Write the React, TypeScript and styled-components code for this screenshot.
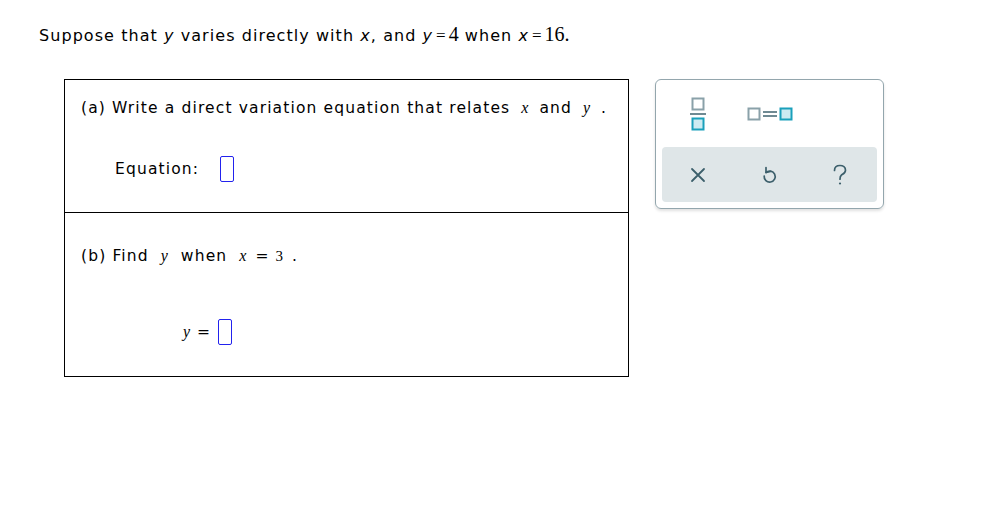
import React from "react";
import styled, { createGlobalStyle } from "styled-components";

const Global = createGlobalStyle`
  html, body { margin: 0; padding: 0; background: #fff; }
  body { font-family: "DejaVu Sans", Verdana, sans-serif; color: #000; }
`;

const Page = styled.div`
  padding: 22px 0 0 39px;
`;

const Prompt = styled.div`
  font-size: 16px;
  line-height: 24px;
  height: 24px;
  letter-spacing: 1.06px;
  white-space: nowrap;
`;

const SansVar = styled.span`
  font-style: italic;
`;

const SerifNum = styled.span`
  font-family: "Liberation Serif", "Times New Roman", serif;
  font-size: 20px;
  letter-spacing: 0;
`;

const Eq = styled.span`
  font-family: "Liberation Serif", serif;
  font-size: 17px;
  margin: 0 3px;
  letter-spacing: 0;
`;

const Row = styled.div`
  display: flex;
  align-items: flex-start;
  margin-top: 33px;
  margin-left: 25px;
  gap: 26px;
`;

const Panel = styled.div`
  width: 563px;
  border: 1px solid #000;
`;

const Section = styled.div<{ $h: number; $top: number; $last?: boolean }>`
  height: ${(p) => p.$h}px;
  box-sizing: border-box;
  padding: ${(p) => p.$top}px 16px 0 16px;
  border-bottom: ${(p) => (p.$last ? "none" : "1px solid #000")};
  font-size: 15.5px;
  letter-spacing: 1.14px;
`;

const Question = styled.div`
  line-height: 18px;
  white-space: nowrap;
`;

const MathVar = styled.span<{ $l?: number; $r?: number }>`
  font-family: "Liberation Serif", "Times New Roman", serif;
  font-style: italic;
  font-size: 16px;
  letter-spacing: 0;
  margin: 0 ${(p) => p.$r ?? 11}px 0 ${(p) => p.$l ?? 11}px;
`;

const MathText = styled.span`
  font-family: "Liberation Serif", "Times New Roman", serif;
  font-size: 15px;
  letter-spacing: 0;
  margin: 0 9px 0 6px;
`;

const AnswerLine = styled.div<{ $top: number; $indent: number; $gap: number }>`
  display: flex;
  align-items: center;
  margin-top: ${(p) => p.$top}px;
  padding-left: ${(p) => p.$indent}px;
  gap: ${(p) => p.$gap}px;
`;

const Label = styled.span`
  white-space: nowrap;
`;

const InputBox = styled.span`
  display: inline-block;
  width: 12px;
  height: 24px;
  border: 1px solid #2222ee;
  border-radius: 2px;
`;

const Toolbox = styled.div`
  width: 229px;
  height: 130px;
  border: 1px solid #93a6ad;
  border-radius: 6px;
  box-sizing: border-box;
  box-shadow: 0 2px 3px rgba(0, 0, 0, 0.12);
  padding: 0 6px 6px 6px;
  display: flex;
  flex-direction: column;
`;

const TemplateRow = styled.div`
  height: 67px;
  display: flex;
  align-items: center;
  padding-left: 27px;
  gap: 40px;
`;

const ActionBar = styled.div`
  flex: 1;
  background: #dfe6e8;
  border-radius: 4px;
  display: grid;
  grid-template-columns: repeat(3, 71px);
  align-items: center;
`;

const IconButton = styled.span`
  display: flex;
  align-items: center;
  justify-content: center;
  height: 30px;
`;

const FractionIcon = () => (
  <svg width="18" height="36" viewBox="0 0 18 36">
    <rect x="3.5" y="2.5" width="11" height="11" fill="#fff" stroke="#8aa1a9" strokeWidth="2" />
    <rect x="1" y="17" width="16" height="2" fill="#6f8a93" />
    <rect x="3.5" y="22.5" width="11" height="11" fill="#cdebf2" stroke="#1aa0bb" strokeWidth="2" />
  </svg>
);

const EqualsIcon = () => (
  <svg width="48" height="16" viewBox="0 0 48 16">
    <rect x="1.5" y="2.5" width="11" height="11" fill="#fff" stroke="#8aa1a9" strokeWidth="2" />
    <rect x="16" y="5" width="14" height="2" fill="#6f8a93" />
    <rect x="16" y="9" width="14" height="2" fill="#6f8a93" />
    <rect x="33.5" y="2.5" width="11" height="11" fill="#cdebf2" stroke="#1aa0bb" strokeWidth="2" />
  </svg>
);

const CloseIcon = () => (
  <svg width="16" height="16" viewBox="0 0 16 16">
    <path d="M2 2 L14 14 M14 2 L2 14" stroke="#3c5f6b" strokeWidth="1.8" strokeLinecap="round" />
  </svg>
);

const UndoIcon = () => (
  <svg width="16" height="18" viewBox="0 0 16 18">
    <path d="M5 6.5 A5.5 5.5 0 1 1 3.2 10" fill="none" stroke="#3c5f6b" strokeWidth="1.7" strokeLinecap="round" />
    <path d="M5 1.5 L5 6.5 L9.5 5.5" fill="none" stroke="#3c5f6b" strokeWidth="1.7" strokeLinecap="round" strokeLinejoin="round" />
  </svg>
);

const HelpIcon = () => (
  <svg width="16" height="22" viewBox="0 0 16 22">
    <path d="M2.5 6.5 C2.5 3 5 1.5 8 1.5 C11 1.5 13.5 3.3 13.5 6.2 C13.5 9 11 10 9.3 11.2 C8.2 12 8 13 8 15.2" fill="none" stroke="#3c5f6b" strokeWidth="1.7" strokeLinecap="round" />
    <circle cx="8" cy="19.5" r="1.1" fill="#3c5f6b" />
  </svg>
);

export default function App() {
  return (
    <>
      <Global />
      <Page>
        <Prompt>
          Suppose that <SansVar>y</SansVar> varies directly with <SansVar>x</SansVar>, and{" "}
          <SansVar>y</SansVar>
          <Eq>=</Eq>
          <SerifNum>4</SerifNum> when <SansVar>x</SansVar>
          <Eq>=</Eq>
          <SerifNum>16.</SerifNum>
        </Prompt>
        <Row>
          <Panel>
            <Section $h={133} $top={19}>
              <Question>
                (a) Write a direct variation equation that relates<MathVar>x</MathVar>and<MathVar>y</MathVar>.
              </Question>
              <AnswerLine $top={39} $indent={34} $gap={21}>
                <Label>Equation:</Label>
                <InputBox />
              </AnswerLine>
            </Section>
            <Section $h={163} $top={34} $last>
              <Question>
                (b) Find<MathVar $l={12} $r={13}>y</MathVar>when<MathVar $l={12} $r={9}>x</MathVar>=<MathText>3</MathText>.
              </Question>
              <AnswerLine $top={54} $indent={102} $gap={7}>
                <Label>
                  <MathVar $l={0} $r={7}>y</MathVar>=
                </Label>
                <InputBox />
              </AnswerLine>
            </Section>
          </Panel>
          <Toolbox>
            <TemplateRow>
              <FractionIcon />
              <EqualsIcon />
            </TemplateRow>
            <ActionBar>
              <IconButton><CloseIcon /></IconButton>
              <IconButton><UndoIcon /></IconButton>
              <IconButton><HelpIcon /></IconButton>
            </ActionBar>
          </Toolbox>
        </Row>
      </Page>
    </>
  );
}
